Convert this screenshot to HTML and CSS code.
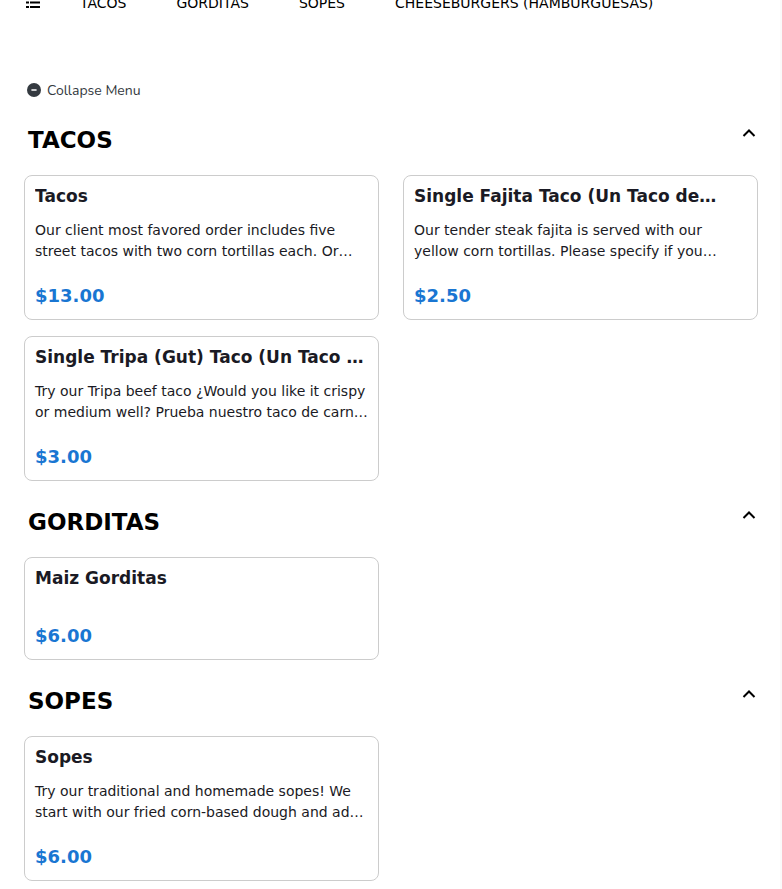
FILE: index.html
```
<!DOCTYPE html>
<html lang="en">
<head>
    <meta charset="UTF-8">
    <meta name="viewport" content="width=device-width, initial-scale=1">
    <title>Menu</title>
    <link rel="stylesheet" href="styles.css">
</head>
<body>
    <nav class="menu-nav">
        <button type="button" class="nav-list" aria-label="All categories">
            <svg width="16" height="16" viewBox="0 0 16 16" fill="#000">
                <path d="M2 2h3v2H2zM6 2h10v2H6zM2 6.500h3v2H2zM6 6.500h10v2H6zM2 11h3v2H2zM6 11h10v2H6z"/>
            </svg>
        </button>
        <a href="#tacos">TACOS</a>
        <a href="#gorditas">GORDITAS</a>
        <a href="#sopes">SOPES</a>
        <a href="#cheeseburgers">CHEESEBURGERS (HAMBURGUESAS)</a>
    </nav>

    <main class="menu">
        <button type="button" class="collapse">
            <svg width="14" height="14" viewBox="0 0 14 14">
                <circle cx="7" cy="7" r="7" fill="#343a40"/>
                <path d="M5 7h4" stroke="#fff" stroke-width="1.6" stroke-linecap="round"/>
            </svg>
            Collapse Menu
        </button>

        <section id="tacos" class="category">
            <div class="category-head">
                <h2>TACOS</h2>
                <button type="button" class="toggle" aria-label="Collapse tacos">
                    <svg width="18" height="18" viewBox="0 0 18 18"><path d="M3.500 12L9 6.500l5.500 5.500"/></svg>
                </button>
            </div>
            <div class="items">
                <article class="item">
                    <h3>Tacos</h3>
                    <p class="desc">Our client most favored order includes five street tacos with two corn tortillas each. Or…</p>
                    <p class="price">$13.00</p>
                </article>
                <article class="item">
                    <h3>Single Fajita Taco (Un Taco de…</h3>
                    <p class="desc">Our tender steak fajita is served with our yellow corn tortillas. Please specify if you…</p>
                    <p class="price">$2.50</p>
                </article>
                <article class="item">
                    <h3>Single Tripa (Gut) Taco (Un Taco …</h3>
                    <p class="desc">Try our Tripa beef taco ¿Would you like it crispy or medium well? Prueba nuestro taco de carn…</p>
                    <p class="price">$3.00</p>
                </article>
            </div>
        </section>

        <section id="gorditas" class="category">
            <div class="category-head">
                <h2>GORDITAS</h2>
                <button type="button" class="toggle" aria-label="Collapse gorditas">
                    <svg width="18" height="18" viewBox="0 0 18 18"><path d="M3.500 12L9 6.500l5.500 5.500"/></svg>
                </button>
            </div>
            <div class="items">
                <article class="item">
                    <h3>Maiz Gorditas</h3>
                    <p class="price">$6.00</p>
                </article>
            </div>
        </section>

        <section id="sopes" class="category">
            <div class="category-head">
                <h2>SOPES</h2>
                <button type="button" class="toggle" aria-label="Collapse sopes">
                    <svg width="18" height="18" viewBox="0 0 18 18"><path d="M3.500 12L9 6.500l5.500 5.500"/></svg>
                </button>
            </div>
            <div class="items">
                <article class="item">
                    <h3>Sopes</h3>
                    <p class="desc">Try our traditional and homemade sopes! We start with our fried corn-based dough and ad…</p>
                    <p class="price">$6.00</p>
                </article>
            </div>
        </section>
    </main>
</body>
</html>
```
FILE: styles.css
```
* {
    box-sizing: border-box;
}
body {
    margin: 0;
    padding: 0 22px 8px 24px;
    border-right: 2px solid #fafafa;
    background: #fff;
    color: #1a1a24;
    font-family: "DejaVu Sans", sans-serif;
    font-size: 14px;
}
h2, h3, p {
    margin: 0;
}
button {
    display: flex;
    align-items: center;
    padding: 0;
    border: 0;
    background: none;
    font: inherit;
    cursor: pointer;
}

/* category bar, partly scrolled out at the top */
.menu-nav {
    display: flex;
    align-items: center;
    gap: 50px;
    height: 24px;
    margin-top: -9px;
    white-space: nowrap;
}
.menu-nav a {
    color: #000;
    text-decoration: none;
}
.nav-list {
    margin-right: -10px;
}

.menu {
    padding-top: 63px;
}
.collapse {
    gap: 6px;
    height: 24px;
    margin-left: 3px;
    color: #343a40;
    font-family: Nunito, "Nunito Sans", "Noto Sans", sans-serif;
}

.category {
    padding-top: 25px;
}
.collapse + .category {
    padding-top: 22px;
}
.category-head {
    display: flex;
    justify-content: space-between;
    align-items: flex-start;
    margin-bottom: 19px;
    padding-left: 4px;
}
.category-head h2 {
    color: #000;
    font-size: 23px;
    line-height: 32px;
}
.toggle svg {
    fill: none;
    stroke: #000;
    stroke-width: 2;
}

.items {
    display: grid;
    grid-template-columns: 1fr 1fr;
    gap: 16px 24px;
}
.item {
    min-width: 0;
    padding: 8px 10px 11px;
    border: 1px solid #ccc;
    border-radius: 8px;
}
.item h3 {
    overflow: hidden;
    font-size: 17px;
    line-height: 24px;
    text-overflow: ellipsis;
    white-space: nowrap;
}
.desc {
    margin-top: 12px;
    line-height: 21px;
}
.price {
    margin-top: 22px;
    color: #1976d2;
    font-size: 18px;
    font-weight: bold;
    line-height: 24px;
}
.item h3 + .price {
    margin-top: 34px;
}
```
